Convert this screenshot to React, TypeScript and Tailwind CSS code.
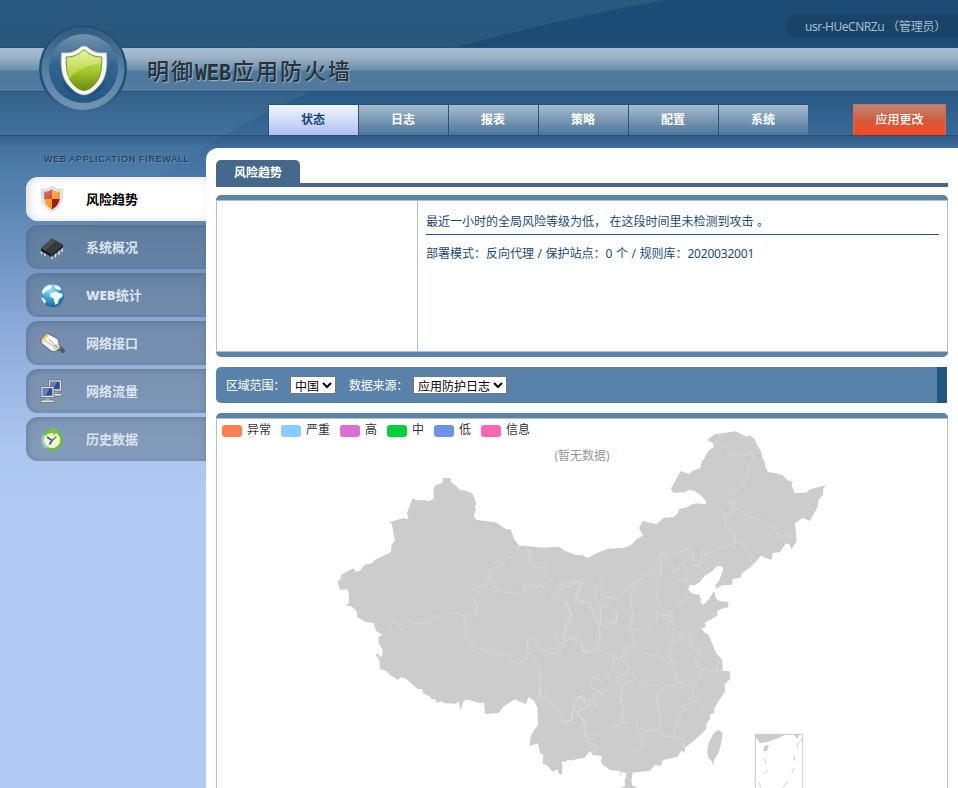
import React from "react";

const tabs = ["状态", "日志", "报表", "策略", "配置", "系统"];

const legend = [
  { label: "异常", color: "bg-[#ff7f50]" },
  { label: "严重", color: "bg-[#87cefa]" },
  { label: "高", color: "bg-[#da70d6]" },
  { label: "中", color: "bg-[#00d03c]" },
  { label: "低", color: "bg-[#6d93e9]" },
  { label: "信息", color: "bg-[#ff65b5]" },
];

function LogoShield() {
  return (
    <svg width="88" height="88" viewBox="0 0 88 88">
      <defs>
        <linearGradient id="rim" x1="0" y1="0" x2="0" y2="1">
          <stop offset="0" stopColor="#1f4f7c" />
          <stop offset=".7" stopColor="#1f4f7c" />
          <stop offset=".93" stopColor="#1f4f7c" stopOpacity="0" />
        </linearGradient>
        <linearGradient id="ring" x1="0" y1="0" x2="0" y2="1">
          <stop offset="0" stopColor="#33597b" />
          <stop offset="0.5" stopColor="#5580a4" />
          <stop offset="1" stopColor="#7494b1" />
        </linearGradient>
        <linearGradient id="disc" x1="0" y1="0" x2="0" y2="1">
          <stop offset="0" stopColor="#7094ae" />
          <stop offset="0.45" stopColor="#32648f" />
          <stop offset="1" stopColor="#245783" />
        </linearGradient>
        <linearGradient id="lime" x1="0" y1="0" x2="0" y2="1">
          <stop offset="0" stopColor="#d9ee8a" />
          <stop offset="0.5" stopColor="#a9c92c" />
          <stop offset="1" stopColor="#668a12" />
        </linearGradient>
        <linearGradient id="gloss" x1="0" y1="0" x2="0" y2="1">
          <stop offset="0" stopColor="#e9f5b0" />
          <stop offset="1" stopColor="#b9d63a" />
        </linearGradient>
      </defs>
      <circle cx="44" cy="44" r="44" fill="url(#rim)" />
      <circle cx="44" cy="43.500" r="41.500" fill="url(#ring)" />
      <circle cx="44.500" cy="43.500" r="34.500" fill="url(#disc)" />
      <ellipse cx="45" cy="59" rx="21" ry="11" fill="#1b4a72" opacity="0.5" />
      <path d="M45 21C48 21 49 22.500 51 24C55 27 60 28.500 67.500 27.500C69 43 67 54 59.500 61.500C55.500 66 50 70 45 70S34.500 66 30.500 61.500C23 54 21 43 22.500 27.500C30 28.500 35 27 39 24C41 22.500 42 21 45 21z" fill="#f7f8f5" stroke="#9a9da3" strokeWidth=".7" />
      <path d="M45 25C47 25 48 27 50 28.500C54 31 58 32 62.800 32C63 45 61.500 53 56 59C52.500 63 48.500 65.500 45 65.500S37.500 63 34 59C28.500 53 27 45 27.200 32C32 32 36 31 40 28.500C42 27 43 25 45 25z" fill="url(#lime)" stroke="#789b24" strokeWidth="1" />
      <path d="M45 26.500C47 27 48 28.500 50 30C54 32 58 33 61.800 33V38C51 40 37 44 30 54C28.500 48 28 42 28.200 33C32 33 36 32 40 30C42 28.500 43 27 45 26.500z" fill="url(#gloss)" opacity=".75" />
    </svg>
  );
}

function ShieldIcon() {
  return (
    <svg width="24" height="26" viewBox="0 0 24 26">
      <defs>
        <clipPath id="sc"><path d="M12 3c3 2.500 5 3 8 2.500c.7 9-1.500 14.500-8 18c-6.500-3.500-8.700-9-8-18c3 .5 5 0 8-2.500z" /></clipPath>
        <linearGradient id="shine" x1="0" y1="0" x2="1" y2="1">
          <stop offset="0" stopColor="#fff" stopOpacity=".45" />
          <stop offset=".55" stopColor="#fff" stopOpacity="0" />
        </linearGradient>
      </defs>
      <path d="M12 .5c3 2.500 7 3.200 10.500 2.500c1 11-2 18.500-10.500 22.200c-8.500-3.700-11.500-11.200-10.500-22.200c3.500.7 7.500 0 10.500-2.500z" fill="#e3e6ea" stroke="#c3c8ce" strokeWidth=".7" />
      <g clipPath="url(#sc)">
        <rect width="12" height="13" fill="#c9402c" />
        <rect x="12" width="12" height="13" fill="#f0a040" />
        <rect y="13" width="12" height="13" fill="#f49a22" />
        <rect x="12" y="13" width="12" height="13" fill="#a01a1c" />
        <rect width="24" height="26" fill="url(#shine)" />
      </g>
    </svg>
  );
}

function ChipIcon() {
  return (
    <svg width="24" height="26" viewBox="0 -2 24 26">
      <path d="M1.500 15v3M5 17v3M12 19v4M15.500 17v4.500M19 14v5M22 11v5" stroke="#dedede" strokeWidth="1.500" />
      <path d="M1 12l10.500 6v3L1 15z" fill="#17181a" />
      <path d="M11.500 18L23 8.500v3L11.500 21z" fill="#232527" />
      <path d="M1 12L12 2.500l11 6L11.500 18z" fill="#35373a" />
      <path d="M1 12L12 2.500l4 2.200L5.500 14.500z" fill="#4b4e51" />
    </svg>
  );
}

function GlobeIcon() {
  return (
    <svg width="24" height="24" viewBox="0 0 24 24">
      <defs>
        <radialGradient id="sea" cx=".4" cy=".25" r=".8">
          <stop offset="0" stopColor="#a5e0f7" />
          <stop offset=".5" stopColor="#3ea1d3" />
          <stop offset="1" stopColor="#14608f" />
        </radialGradient>
      </defs>
      <circle cx="12.500" cy="12.500" r="11.500" fill="url(#sea)" />
      <path d="M2 8L5 4L9 2L13 2.500L11 5L9 6.500L7 8L5 9L4 11L2 10zM1 14L4 15.500L6 18L5 21L2.500 18zM10 11L13 9L16 8.500L19 10L23 11L22 14L19 16L18 20L15.500 22L14 18L13.500 15L10.500 14zM15 2L19 3L21.500 6.500L19 7L16 6L14 4z" fill="#f1f9fb" />
    </svg>
  );
}

function PlugIcon() {
  return (
    <svg width="26" height="24" viewBox="0 0 26 24">
      <path d="M19 18c2-1 3 0 4 2" stroke="#55585d" strokeWidth="4" strokeLinecap="round" fill="none" />
      <path d="M1 8L7 2L18 8L20.500 17L15 21L11 20L1 12z" fill="#d8d7d2" stroke="#68696b" strokeWidth="1" />
      <path d="M8 3.500L17.500 8.500L18 12L14 14L3.500 7.500z" fill="#fbfbfa" />
      <path d="M3 9.500L13 16L14 20L11.500 19L2.500 12z" fill="#f3f3f1" />
      <path d="M1.500 8L7 2.500L9 4L3.500 9.500z" fill="#f0c257" />
      <path d="M9 8L17 16M13.500 14.500L20 18" stroke="#9b9b99" strokeWidth=".7" />
    </svg>
  );
}

function Monitor() {
  return (
    <g>
      <path d="M1.500 14h11l2 2.500h-15z" fill="#e3e2da" stroke="#68696b" strokeWidth=".7" />
      <rect x="5" y="11" width="4" height="3" fill="#a7a69f" />
      <rect x=".5" y=".5" width="13" height="11" fill="#e2e1d9" stroke="#71716c" strokeWidth=".8" />
      <rect x="2.200" y="2.200" width="9.600" height="7.500" fill="#2c4a98" />
      <path d="M2.200 2.200h7L5 9.700H2.200z" fill="#5f80c6" />
    </g>
  );
}

function NetworkIcon() {
  return (
    <svg width="24" height="24" viewBox="-.5 -.5 24 24">
      <g transform="translate(7.500 0)"><Monitor /></g>
      <g transform="translate(0 6.500)"><Monitor /></g>
    </svg>
  );
}

function ClockIcon() {
  return (
    <svg width="24" height="24" viewBox="0 0 24 24">
      <circle cx="12" cy="13" r="9.500" fill="#f6f4cf" stroke="#68bd38" strokeWidth="2.500" />
      <path d="M4 8A9.500 9.500 0 0 0 7 21" fill="none" stroke="#9dc8d8" strokeWidth="2.500" />
      <path d="M11 0L18 3.500L14 8.500L13 6C10 6 7 7 5 9C6 5 8 3 11 2.500z" fill="#72c832" />
      <path d="M12 13.500l4.500-4" stroke="#3d9c45" strokeWidth="1.500" />
      <path d="M7 10l5 3.500l-2.500 4" stroke="#2f64a2" strokeWidth="1.700" fill="none" />
    </svg>
  );
}

const menu = [
  { label: "风险趋势", icon: <ShieldIcon /> },
  { label: "系统概况", icon: <ChipIcon /> },
  { label: "WEB统计", icon: <GlobeIcon /> },
  { label: "网络接口", icon: <PlugIcon /> },
  { label: "网络流量", icon: <NetworkIcon /> },
  { label: "历史数据", icon: <ClockIcon /> },
];

// Land pieces and province borders are drawn on a grid three times finer than the page.
function ChinaMap() {
  return (
    <svg className="block" width="730" height="369" viewBox="217 419 730 369">
      <g fill="#ccc" stroke="none">
        <path transform="translate(330 460) scale(.33333)" d="M22 364L30 390 52 388 56 400 57 430 46 436 66 440 80 454 82 472 110 487 130 488 138 512 156 524 146 530 145 548 158 570 156 588 150 590 142 578 138 586 148 600 150 626 170 634 180 645 205 660 210 652 226 654 262 686 276 688 280 700 300 710 303 716 316 718 320 728 334 724 342 730 376 731 386 724 391 750 402 722 412 719 452 730 462 727 465 762 506 759 520 740 554 718 588 733 595 711 612 722 622 742 624 795 603 824 598 858 624 850 630 880 640 884 638 912 650 915 668 935 682 928 687 942 697 942 695 904 708 906 712 898 724 902 734 893 752 896 766 890 780 872V294L764 292 758 286 738 286 700 270 690 262 672 260 638 263 588 257 568 257 552 236 542 208 528 208 498 187 440 180 433 172 432 162 439 150 434 140 439 132 436 120 426 100 408 92 390 90 376 76 362 66 363 54 340 54 338 68 316 76 310 86 312 116 294 124 286 121 258 121 248 114 231 160 236 178 218 174 178 187 186 192 190 220 195 240 184 258 183 276 134 300 126 310 104 314 90 332 75 335 70 325 56 332 34 344 30 360z" />
        <path transform="translate(560 420) scale(.33333)" d="M0 384L12 392 38 404 60 406 84 414 104 402 142 386 190 384 212 376 232 356 249 347 237 324 248 303 290 313 310 294 340 291 352 282 358 267 380 262 398 252 412 250 439 253 436 240 420 224 404 213 388 209 374 217 340 218 333 206 362 153 388 162 398 152 421 144 424 128 446 92 462 80 458 68 441 60 464 43 528 34 558 50 570 46 584 58 592 76 604 96 608 116 614 124 616 140 624 156 650 160 668 166 682 180 697 186 696 198 704 219 738 218 750 208 798 196 790 206 789 224 776 240 772 262 760 284 750 303 728 294 705 310 707 330 710 364 694 388 688 372 678 370 660 396 638 400 634 420 602 408 576 438 548 458 540 474 518 476 516 494 486 496 468 506 466 496 478 480 490 448 488 440 470 438 458 452 434 468 420 486 404 496 390 494 384 508 394 520 418 524 418 544 430 555 440 548 462 514 468 536 478 544 505 546 504 562 484 566 470 574 474 584 450 600H0z" />
        <path transform="translate(560 590) scale(.33333)" d="M0 0H386L396 12 418 14 424 30 418 38 430 45 442 34 452 22 462 4 468 26 478 34 505 36 504 52 482 56 466 66 472 74 452 86 434 98 438 112 424 114 434 128 446 134 458 164 468 190 487 210 488 242 508 244 511 266 494 284 496 304 484 320 474 336 462 356 464 368 448 374 452 384 440 400 438 418 420 436 394 458 374 474 376 488 364 482 352 500 310 510 302 528 286 524 270 542 218 548 214 572 218 590 222 600H196L194 574 200 550 184 546 182 562 180 543 150 540 130 526 122 514 126 498 98 496 92 484 78 490 76 502 58 504 46 510 28 504 18 514 4 514 8 530 4 552 0 555z" />
        <path transform="translate(560 590) scale(.33333)" d="M460 527L455 514 444 502 442 480 446 460 458 434 468 424 479 421 488 430 484 458 476 488 462 510zM182 594L194 588H222L234 594zM586 433H680L650 446 622 456 600 459 586 440zM613 468L627 465 621 482 610 484zM702 433H720L711 446z" />
      </g>
      <g fill="none" stroke="#dedede" strokeWidth="2" strokeLinejoin="round">
        <path transform="translate(330 460) scale(.33333)" d="M568 257L562 282 548 292 534 292 508 322 488 324 480 340 471 374 420 390 424 404 445 434 438 446 440 468 402 468 384 458 350 458 326 466 320 478 276 490 250 490 240 482 220 494 188 490 172 508 170 520 156 524M402 468L403 490 410 510 406 540 430 562 490 576 504 582 534 584 546 604 566 610 588 598 594 578 592 545 602 532 614 536 622 560 654 576 684 578 700 560 676 540 674 526 700 532 706 546 724 530 734 545 752 548 760 576 780 578M471 374L488 370 494 384 522 398 556 396 570 402 582 398 584 372 612 382 632 376 656 388 664 400 690 408 714 430 724 468 710 488 706 520 696 528M588 257L600 286 598 300 614 324 636 322 652 314 658 326 644 348 660 364 690 386 706 378 724 382 734 366 752 366 752 380 738 398 736 412 764 426 776 428 780 450M594 578L612 590 626 624 632 680 632 718 638 720 642 712 650 702 656 724 676 738 696 782 708 788 724 780 728 756 744 712 756 708 756 720 778 726 778 740 748 746 744 768 760 776 760 796 770 810 764 828 780 840M612 722L626 718 630 688" />
        <path transform="translate(560 420) scale(.33333)" d="M472 42L484 50 468 64 492 72 502 82 510 104 564 104 572 94 584 112 566 138 564 164 548 196 498 232 512 248 526 254 522 244 514 246 520 266 534 266 546 282 576 292 610 302 624 320 640 320 654 352 666 348 690 338 692 350 708 356M520 266L512 272 514 282 484 274 496 290 496 318 522 342 526 366 554 374 568 404 578 434M526 370L500 378 470 382 440 404 434 408 434 392 426 392 424 406 428 414 416 440 430 450 434 464M416 440L400 434 402 400 388 384 366 392 342 404 330 416 318 414 312 398 300 404 296 418 306 426 302 446 304 462 290 484 296 508 288 518 300 560 288 576 300 580 336 590M304 450L262 458 254 474 230 480 198 506 174 538 130 528 120 512 130 490 118 488 106 510 106 534 118 550M230 480L212 530 216 570 218 600M334 464L342 474 360 480 378 476 376 452 382 446 366 432 356 440 356 448 344 454 334 464M378 476L384 488 384 506M332 580L334 574 360 546 390 532M0 494L20 488 32 492 60 486 64 498 50 518 48 540 80 546 94 548 98 580 118 610M0 538L20 552 34 590M120 560L144 560 170 580 168 608" />
        <path transform="translate(560 590) scale(.33333)" d="M16 36L30 60 36 80 12 118 14 138 36 140 66 154 68 184 100 182 130 184 162 196 184 210M0 160L10 158 14 168 20 150M102 80L118 106 120 130 116 160 106 168 108 180M120 50L122 78 120 104 166 100 172 70M218 70L208 110 218 140 222 160 238 184 268 194 300 196 326 222 334 204 322 186 334 176 330 160 350 148 388 146 400 178 422 182 422 192 404 198 402 210 416 216 412 232 430 238 452 242 470 246M488 242L470 246 472 222 480 218M216 126L250 112 288 96 290 66 308 74 330 76 338 86 318 106 360 130 360 142M360 130L380 132 390 126 408 132 416 114M184 210L190 180 208 168 230 172M190 180L204 192 188 214 198 220 206 236 196 252 170 256 168 276 184 290M162 196L158 240 142 260 130 272 100 264 92 286 100 300 118 304 126 318 140 300 160 300 168 308 178 322 184 330 186 290 198 276 226 268 262 284 300 284 300 300 330 286 368 278 396 286 412 276 430 238M334 204L342 230 348 266 368 278M300 300L290 320 298 370 298 420M402 290L400 324 408 338 442 350 456 356M402 336L370 345 370 360 360 372 344 418 340 440M118 304L92 318 114 334 110 344 80 352 54 362 54 374 70 390 78 408 72 430 88 434 106 432 132 428 158 414 186 398 212 400M186 330L182 340 190 350 186 398M230 392L236 430 250 434 262 422 298 420 308 438 340 440 366 446 374 474M250 434L240 476 210 520 196 532M0 394L36 390 36 360 50 330 66 316 74 320 74 340 90 330 100 336M72 430L84 460 106 462 106 484 92 486" />
      </g>
      <g transform="translate(560 590) scale(.33333)" fill="none" stroke="#ccc" strokeWidth="3">
        <path d="M586 600V433H728V600M613 505l5 15M611 553l12-13M598 578l4 14M727 445l-12 16l-4 12M703 496v16M703 534l-8 14M683 573l-14 20" />
      </g>
    </svg>
  );
}

export default function App() {
  return (
    <div className="relative h-[788px] w-[958px] overflow-hidden bg-[#b0caf3] font-['Noto_Sans','Noto_Sans_CJK_SC',sans-serif] text-xs">
      <svg className="absolute left-0 top-0" width="958" height="788">
        <defs>
          <linearGradient id="page" x1="0" y1="0" x2="0" y2="500" gradientUnits="userSpaceOnUse">
            <stop offset="0" stopColor="#1b4c76" />
            <stop offset=".09" stopColor="#1c4c76" />
            <stop offset=".19" stopColor="#295a86" />
            <stop offset=".27" stopColor="#39699a" />
            <stop offset=".4" stopColor="#5581b1" />
            <stop offset=".65" stopColor="#8ba9d8" />
            <stop offset=".9" stopColor="#abc6f0" />
            <stop offset="1" stopColor="#b0caf3" />
          </linearGradient>
          <linearGradient id="swoosh" x1="0" y1="0" x2="0" y2="300" gradientUnits="userSpaceOnUse">
            <stop offset="0" stopColor="#a8d0c8" stopOpacity=".1" />
            <stop offset=".5" stopColor="#a8d0c8" stopOpacity=".07" />
            <stop offset="1" stopColor="#a8d0c8" stopOpacity="0" />
          </linearGradient>
        </defs>
        <rect width="958" height="788" fill="url(#page)" />
        <path d="M0 0H665Q560 19 455 47Q370 70 310 92Q220 132 160 176Q60 240 0 330z" fill="url(#swoosh)" />
      </svg>
      <header className="relative h-[136px] border-b border-[#2a5077]">
        <div className="flex h-[47px] justify-end pt-[14px]">
          <div className="h-6 w-[173px] whitespace-nowrap rounded-l-xl bg-[#194468] pl-5 leading-6 text-[#a7bccd]">
            <span className="tracking-[-0.48px]">usr-HUeCNRZu</span>
            <span className="ml-[3px] font-['Noto_Sans_CJK_SC'] tracking-[-0.2px]">（管理员）</span>
          </div>
        </div>
        <div className="h-[45px] border-y border-[#25507b] bg-[linear-gradient(#a9bccf_0,#a0b5c9_8px,#6d92ae_21px,#5d86a4_23px,#4d799c_23px,#54799f_100%)] pl-[147px]">
          <h1 className="whitespace-nowrap text-[22px] font-medium leading-[44px] tracking-[2px] text-[#29323b] [text-shadow:1px_1px_1px_#9db1c3]">
            明御<span className="inline-block w-[37px] origin-center scale-y-[1.22] font-['Liberation_Mono'] text-[20px] font-bold tracking-normal">WEB</span>应用防火墙
          </h1>
        </div>
        <div className="absolute left-[39px] top-[25px]"><LogoShield /></div>
        <nav className="flex pl-[268px] pt-3 font-bold text-white">
          {tabs.map((t, i) => (
            <div
              key={t}
              className={
                "h-[31px] w-[90px] border-l border-t border-[#2b527b] pr-px text-center leading-[29px] " +
                (i === 0 ? "bg-linear-to-b from-[#f2f6ff] to-[#afc1ef] text-[#1d4a73]" : "bg-linear-to-b from-[#a6bccb] to-[#4c759b]")
              }
            >
              {t}
            </div>
          ))}
          <div className="ml-[45px] h-[31px] w-[93px] border border-b-0 border-[#e0674f] bg-linear-to-b from-[#bd8573] via-[#d25a3a] to-[#fc471c] text-center font-medium leading-[29px]">应用更改</div>
        </nav>
      </header>
      <div className="relative flex h-[652px] bg-[linear-gradient(#2a4d6f80_0,#2a4d6f00_12px)] pt-3">
        <aside className="w-[206px] pl-[26px]">
          <div className="h-[29px] whitespace-nowrap pl-[18px] font-['Liberation_Sans'] text-[9px] leading-[23px] tracking-[0.7px] text-[#1d3347] [text-shadow:1px_1px_0_#6c8fb0]">WEB APPLICATION FIREWALL</div>
          <div className="flex flex-col gap-1">
            {menu.map((m, i) => (
              <div
                key={m.label}
                className={
                  "flex h-11 items-center rounded-l-xl text-[13px] font-bold " +
                  (i === 0
                    ? "bg-white text-black shadow-[inset_3px_0_8px_#ddd]"
                    : "bg-[#5c7084]/50 text-[#dce4ee] shadow-[inset_1px_1px_6px_#4a607a80]")
                }
              >
                <div className="flex w-[60px] pl-[14px]">{m.icon}</div>
                <span className="pt-0.5">
                  {m.label.startsWith("WEB") ? (
                    <><span className="font-black tracking-[0.1px]">WEB</span>{m.label.slice(3)}</>
                  ) : (
                    m.label
                  )}
                </span>
              </div>
            ))}
          </div>
        </aside>
        <main className="w-[752px] rounded-tl-xl bg-white pl-[10px] pt-3">
          <div className="h-[27px] w-[732px] border-b-4 border-[#44698e]">
            <div className="h-[27px] w-[84px] rounded-t-[5px] rounded-bl-[5px] bg-[#44698c] text-center font-bold leading-[25px] text-white">风险趋势</div>
          </div>
          <section className="mt-2 h-[162px] w-[732px] overflow-hidden rounded-[5px] border-y-[5px] border-[#5c84a7]">
            <div className="flex h-[152px] border border-[#b5bdd3]">
              <div className="w-[201px] border-r border-[#b5bdd3]" />
              <div className="flex-1 pl-2 pr-2 pt-2 text-[#1b4a75] [word-spacing:0.4px]">
                <p className="h-[26px] border-b border-[#245582] leading-[26px]">最近一小时的全局风险等级为低，&nbsp;在这段时间里未检测到攻击 。</p>
                <p className="mt-[6px] leading-[26px]">部署模式：反向代理 / 保护站点：0 个 / 规则库：<span className="tracking-[-0.2px]">2020032001</span></p>
              </div>
            </div>
          </section>
          <section className="mt-[10px] flex h-9 w-[731px] items-center rounded-l-[5px] border-r-[10px] border-[#245580] bg-[#5982aa] pl-[10px] text-white">
            <span className="w-16 whitespace-nowrap font-['Noto_Sans_CJK_SC'] tracking-[-0.2px]">区域范围：</span>
            <select className="h-[18px] w-[46px] border border-[#767676] bg-white text-xs text-black"><option>中国</option></select>
            <span className="ml-[13px] w-16 whitespace-nowrap font-['Noto_Sans_CJK_SC'] tracking-[-0.2px]">数据来源：</span>
            <select className="h-[18px] w-[94px] border border-[#767676] bg-white text-xs text-black"><option>应用防护日志</option></select>
          </section>
          <section className="relative mt-[10px] h-[375px] w-[732px] overflow-hidden rounded-t-[5px] border-t-[5px] border-[#5c84a7]">
            <div className="h-[370px] border border-b-0 border-[#b5bdd3]">
              <ChinaMap />
            </div>
            <div className="absolute left-[6px] top-[3px] flex gap-[10px] leading-[18px] text-[#333]">
              {legend.map((l) => (
                <div key={l.label} className="flex items-center gap-[5px]">
                  <i className={"mt-px h-3 w-5 rounded-[3px] " + l.color} />
                  {l.label}
                </div>
              ))}
            </div>
            <div className="absolute left-0 top-[29px] w-full text-center leading-[18px] text-[#999]">(暂无数据)</div>
          </section>
        </main>
      </div>
    </div>
  );
}
